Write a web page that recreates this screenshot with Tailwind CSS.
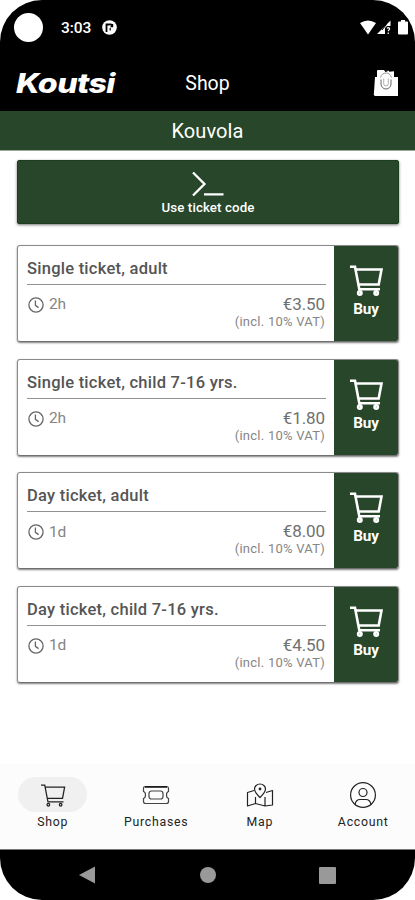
<!DOCTYPE html>
<html lang="en">
<head>
<meta charset="utf-8">
<meta name="viewport" content="width=device-width, initial-scale=1">
<title>Koutsi – Shop</title>
<script src="https://cdn.jsdelivr.net/npm/@tailwindcss/browser@4"></script>
</head>
<body class="bg-white font-['Roboto',sans-serif]">
<svg class="hidden">
  <symbol id="cart" viewBox="0 0 34 32" fill="none" stroke="currentColor">
    <path d="M1 2.800h5L10.300 25.200H31M7 5.500h25.500L29.700 20.500H9.500"/>
    <circle cx="10.800" cy="29" r="1.700"/><circle cx="27.200" cy="29" r="1.700"/>
  </symbol>
  <symbol id="clock" viewBox="0 0 16 16" fill="none" stroke="currentColor" stroke-width="1.3">
    <circle cx="8" cy="8" r="7.1"/><path d="M7.4 3.6v4.8l3.2 2.2"/>
  </symbol>
</svg>
<div class="flex h-[900px] w-[415px] flex-col overflow-hidden rounded-[42px] bg-white">
  <div class="flex h-[54px] shrink-0 items-center bg-black pl-[14px] text-white">
    <div class="size-[29px] rounded-full bg-white"></div>
    <span class="ml-[18px] mt-px w-[31px] text-[15.500px] font-medium leading-5 tracking-[-0.1px]">3:03</span>
    <svg class="ml-[10px] size-[15px]" viewBox="0 0 15 15"><circle cx="7.5" cy="7.5" r="7.3" fill="#fff"/><path d="M4.500 12V4.500h5" fill="none" stroke="#000" stroke-width="1.800"/><path d="M8 4h3.200v3.200H8z" fill="#000"/><path d="M8.200 8v2.500" stroke="#000" stroke-width="1.200"/><circle cx="8.200" cy="6" r=".8" fill="#fff"/></svg>
    <svg class="ml-auto h-[15px] w-[16px]" viewBox="0 0 16 15"><path d="M0 3Q8-2 16 3L8 14.500Z" fill="#fff"/></svg>
    <svg class="ml-px h-[15px] w-[14px]" viewBox="0 0 14 15"><path d="M0 14 13.500.500V6H10L8 8v6Z" fill="#fff"/><path d="M9.500 4.500 5 10" stroke="#000"/><path d="M10 8.500c1-1.500 3-.500 2.500.700-.3.700-1.200.800-1.200 2M11.200 12.500v1.500" fill="none" stroke="#fff" stroke-width="1.200"/></svg>
    <svg class="ml-[7px] mr-[7px] h-[15px] w-[10px]" viewBox="0 0 10 15"><path d="M0 2.500Q0 1.500 1 1.500H3V0H7V1.500H9Q10 1.500 10 2.500V13.500Q10 14.500 9 14.500H1Q0 14.500 0 13.500Z" fill="#fff"/></svg>
  </div>
  <header class="grid h-[57px] shrink-0 grid-cols-3 items-center bg-black text-white">
    <div class="pl-[16px]"><span class="mt-[2px] inline-block origin-left scale-x-[1.19] font-['Inter',sans-serif] text-[27px] font-extrabold italic leading-8 tracking-[-0.5px]">Koutsi</span></div>
    <h1 class="mt-[2px] text-center text-[19.500px] leading-6">Shop</h1>
    <svg class="mr-[16px] h-[28px] w-[26px] justify-self-end" viewBox="0 0 26 28">
      <path d="M4 8V1.500Q4 1 5 1h6l1.500 2L16 1.500v1.200l5-.5V8h4v18.500q0 .5-.5.500H2L.8 26 2 8Z" fill="#fff"/>
      <path d="M7.500 8.500Q9 4 13 4t5.500 4.500" fill="none" stroke="#999" stroke-width="1"/>
      <path d="M8 10.500v4.500a5 5 0 0 0 10 0V10.500" fill="none" stroke="#666" stroke-width="1"/>
      <path d="M10.700 9.500v5.200a2.300 2.300 0 0 0 4.600 0V9.500" fill="none" stroke="#999" stroke-width=".8"/>
      <path d="M11.500 1h4l-2.500 2z" fill="#222"/>
    </svg>
  </header>
  <div class="flex h-[40px] shrink-0 items-center justify-center border-b border-[#98a899] bg-[#27462a] text-[20px] leading-6 tracking-[0.1px] text-white">Kouvola</div>
  <main class="flex h-[613px] shrink-0 flex-col pl-[17px] pr-[16px] pt-[9px]">
    <button class="flex h-[64px] w-full shrink-0 flex-col items-center rounded-[2px] border border-[#1c3e20] bg-[#27462a] pt-[9px] text-white shadow-[0_1px_3px_rgba(0,0,0,.55)]">
      <svg class="h-[28px] w-[34px]" viewBox="0 0 34 28" fill="none" stroke="#fff" stroke-width="2.300"><path d="M2 2.500 13.500 14 2 25.500M13 24.300H32.500"/></svg>
      <span class="mt-[2px] text-[13.300px] font-medium leading-4 tracking-[0.1px]">Use ticket code</span>
    </button>
    <div class="mt-[21px] flex flex-col gap-[16.600px] text-[#626262]">
      <article class="flex h-[97px] overflow-hidden rounded-[3px] border border-[#8a8a8a] border-b-[#707070] shadow-[0_1px_2px_rgba(0,0,0,.5)]">
        <div class="flex-1 pl-[9px] pr-[8px] pt-[11px]">
          <h2 class="h-[28px] border-b border-[#929292] text-[16.500px] font-medium leading-[24px] tracking-[0.25px] text-[#555]">Single ticket, adult</h2>
          <div class="flex justify-between pt-[9px]">
            <div class="flex h-[22px] items-center gap-[5px] pl-px text-[15.500px] tracking-[-0.2px] text-[#858585]"><svg class="size-[16px] text-[#666]"><use href="#clock"/></svg>2h</div>
            <div class="pr-px text-right"><div class="text-[17px] leading-5 tracking-[-0.100px] text-[#707070]">€3.50</div><div class="text-[13px] leading-4 tracking-[0.25px] text-[#858585]">(incl. 10% VAT)</div></div>
          </div>
        </div>
        <button class="flex w-[64px] flex-col items-center bg-[#27462a] pt-[18px] text-white"><svg class="h-[32px] w-[34px]" stroke-width="2.600"><use href="#cart"/></svg><span class="mt-[3px] text-[15.300px] font-bold leading-5 tracking-[-0.200px]">Buy</span></button>
      </article>
      <article class="flex h-[97px] overflow-hidden rounded-[3px] border border-[#8a8a8a] border-b-[#707070] shadow-[0_1px_2px_rgba(0,0,0,.5)]">
        <div class="flex-1 pl-[9px] pr-[8px] pt-[11px]">
          <h2 class="h-[28px] border-b border-[#929292] text-[16.500px] font-medium leading-[24px] tracking-[0.25px] text-[#555]">Single ticket, child 7-16 yrs.</h2>
          <div class="flex justify-between pt-[9px]">
            <div class="flex h-[22px] items-center gap-[5px] pl-px text-[15.500px] tracking-[-0.2px] text-[#858585]"><svg class="size-[16px] text-[#666]"><use href="#clock"/></svg>2h</div>
            <div class="pr-px text-right"><div class="text-[17px] leading-5 tracking-[-0.100px] text-[#707070]">€1.80</div><div class="text-[13px] leading-4 tracking-[0.25px] text-[#858585]">(incl. 10% VAT)</div></div>
          </div>
        </div>
        <button class="flex w-[64px] flex-col items-center bg-[#27462a] pt-[18px] text-white"><svg class="h-[32px] w-[34px]" stroke-width="2.600"><use href="#cart"/></svg><span class="mt-[3px] text-[15.300px] font-bold leading-5 tracking-[-0.200px]">Buy</span></button>
      </article>
      <article class="flex h-[97px] overflow-hidden rounded-[3px] border border-[#8a8a8a] border-b-[#707070] shadow-[0_1px_2px_rgba(0,0,0,.5)]">
        <div class="flex-1 pl-[9px] pr-[8px] pt-[11px]">
          <h2 class="h-[28px] border-b border-[#929292] text-[16.500px] font-medium leading-[24px] tracking-[0.25px] text-[#555]">Day ticket, adult</h2>
          <div class="flex justify-between pt-[9px]">
            <div class="flex h-[22px] items-center gap-[5px] pl-px text-[15.500px] tracking-[-0.2px] text-[#858585]"><svg class="size-[16px] text-[#666]"><use href="#clock"/></svg>1d</div>
            <div class="pr-px text-right"><div class="text-[17px] leading-5 tracking-[-0.100px] text-[#707070]">€8.00</div><div class="text-[13px] leading-4 tracking-[0.25px] text-[#858585]">(incl. 10% VAT)</div></div>
          </div>
        </div>
        <button class="flex w-[64px] flex-col items-center bg-[#27462a] pt-[18px] text-white"><svg class="h-[32px] w-[34px]" stroke-width="2.600"><use href="#cart"/></svg><span class="mt-[3px] text-[15.300px] font-bold leading-5 tracking-[-0.200px]">Buy</span></button>
      </article>
      <article class="flex h-[97px] overflow-hidden rounded-[3px] border border-[#8a8a8a] border-b-[#707070] shadow-[0_1px_2px_rgba(0,0,0,.5)]">
        <div class="flex-1 pl-[9px] pr-[8px] pt-[11px]">
          <h2 class="h-[28px] border-b border-[#929292] text-[16.500px] font-medium leading-[24px] tracking-[0.25px] text-[#555]">Day ticket, child 7-16 yrs.</h2>
          <div class="flex justify-between pt-[9px]">
            <div class="flex h-[22px] items-center gap-[5px] pl-px text-[15.500px] tracking-[-0.2px] text-[#858585]"><svg class="size-[16px] text-[#666]"><use href="#clock"/></svg>1d</div>
            <div class="pr-px text-right"><div class="text-[17px] leading-5 tracking-[-0.100px] text-[#707070]">€4.50</div><div class="text-[13px] leading-4 tracking-[0.25px] text-[#858585]">(incl. 10% VAT)</div></div>
          </div>
        </div>
        <button class="flex w-[64px] flex-col items-center bg-[#27462a] pt-[18px] text-white"><svg class="h-[32px] w-[34px]" stroke-width="2.600"><use href="#cart"/></svg><span class="mt-[3px] text-[15.300px] font-bold leading-5 tracking-[-0.200px]">Buy</span></button>
      </article>
    </div>
  </main>
  <nav class="grid h-[86px] shrink-0 grid-cols-4 border-b border-[#777] bg-[#fcfcfc] pl-px pt-[13px] text-[12.300px] tracking-[0.75px] text-[#222]">
    <a class="flex flex-col items-center"><span class="flex h-[35px] w-[69px] items-center justify-center rounded-full bg-[#f0f0f0]"><svg class="h-[24px] w-[26px]" stroke-width="1.700"><use href="#cart"/></svg></span><span class="mt-[2px] leading-4">Shop</span></a>
    <a class="flex flex-col items-center"><span class="flex h-[35px] items-center"><svg class="h-[20px] w-[28px]" viewBox="0 0 28 20" fill="none" stroke="#444" stroke-width="1.200"><path d="M3.500 1.500h21Q26.500 1.500 26.500 3.500V6.500Q24.500 7 24.500 10T26.500 13.500V16.500Q26.500 18.500 24.500 18.500H3.500Q1.500 18.500 1.500 16.500V13.500Q3.500 13 3.500 10T1.500 6.500V3.500Q1.500 1.500 3.500 1.500Z"/><path d="M3 2h22" stroke="#111" stroke-width="1.700"/><rect x="7" y="6" width="14" height="8" rx="2.500"/></svg></span><span class="mt-[2px] leading-4">Purchases</span></a>
    <a class="flex flex-col items-center"><span class="flex h-[35px] items-center"><svg class="h-[24px] w-[28px]" viewBox="0 0 28 24" fill="none" stroke="#222" stroke-width="1.200" stroke-linejoin="round"><path d="M8 7.500 1.500 9.500V23L9.500 20.500 19 23 26.500 22V7.500L20 9.500M9.500 14v6.500M19 14v9"/><path d="M14 14.500Q8.500 9 8.500 6a5.500 5 0 0 1 11 0Q19.500 9 14 14.500Z"/><circle cx="14" cy="6" r=".8"/></svg></span><span class="mt-[2px] leading-4">Map</span></a>
    <a class="flex flex-col items-center"><span class="flex h-[35px] items-center"><svg class="size-[28px]" viewBox="0 0 28 28" fill="none" stroke="#222" stroke-width="1.200"><circle cx="14" cy="14" r="12.400"/><circle cx="14" cy="11.500" r="4"/><path d="M6 23.500q1-5 5-5h6q4 0 5 5"/></svg></span><span class="mt-[2px] leading-4">Account</span></a>
  </nav>
  <div class="grid h-[50px] shrink-0 grid-cols-[174px_67px_172px] items-center justify-items-center bg-black">
    <svg class="h-[18px] w-[16px]" viewBox="0 0 16 18"><path d="M0 9 16 .5v17z" fill="#999"/></svg>
    <span class="size-[16px] rounded-full bg-[#999]"></span>
    <span class="size-[17px] rounded-[1px] bg-[#999]"></span>
  </div>
</div>
</body>
</html>
